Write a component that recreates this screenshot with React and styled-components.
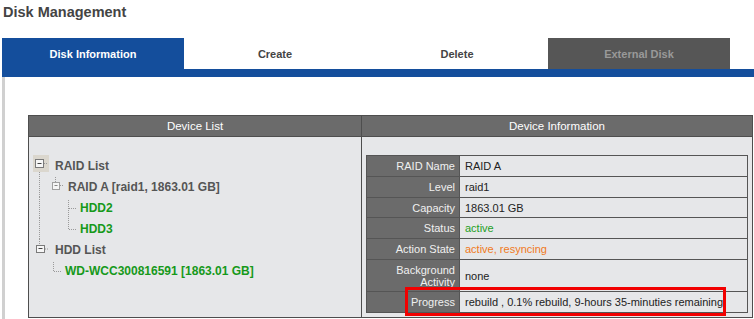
import React from 'react';
import styled, { createGlobalStyle } from 'styled-components';

const GlobalStyle = createGlobalStyle`
    body {
        margin: 0;
        background: #fff;
        font-family: "Liberation Sans", Arial, sans-serif;
    }
`;

const Page = styled.div`
    width: 754px;
    height: 319px;
    overflow: hidden;
`;

const Title = styled.h1`
    margin: 0;
    height: 38px;
    box-sizing: border-box;
    padding: 4px 0 0 3px;
    font-size: 14.5px;
    line-height: 16px;
    font-weight: bold;
    color: #444;
`;

const TabBar = styled.ul`
    list-style: none;
    margin: 0 0 0 2px;
    padding: 0;
    display: flex;
    height: 31px;
    border-bottom: 8px solid #144e9c;
`;

const tabColors = {
    active: { bg: '#144e9c', fg: '#fff' },
    normal: { bg: '#fff', fg: '#444' },
    disabled: { bg: '#565656', fg: '#999' },
};

const Tab = styled.li`
    width: 182px;
    display: flex;
    align-items: center;
    justify-content: center;
    font-size: 11px;
    font-weight: bold;
    background: ${(p) => tabColors[p.$state].bg};
    color: ${(p) => tabColors[p.$state].fg};
`;

const Content = styled.div`
    margin-left: 2px;
    border-left: 3px solid #d0d0d0;
    padding: 38px 1px 0 23px;
    height: 242px;
    box-sizing: border-box;
`;

const DeviceTable = styled.div`
    display: grid;
    grid-template-columns: 332px 1fr;
    border: 1px solid #4e4e4e;
    background: #e6e7e9;
`;

const HeadCell = styled.div`
    height: 20px;
    line-height: 20px;
    background: #6b6b6b;
    color: #fff;
    font-size: 11.5px;
    text-align: center;
    border-bottom: 1px solid #4e4e4e;
    border-left: ${(p) => (p.$divider ? '1px solid #4e4e4e' : 'none')};
`;

const BodyCell = styled.div`
    padding: ${(p) => p.$pad};
    border-left: ${(p) => (p.$divider ? '1px solid #4e4e4e' : 'none')};
`;

/* ---------- tree ---------- */

const TreeRow = styled.div`
    display: flex;
    align-items: center;
    height: 21px;
    font-size: 12px;
    font-weight: bold;
    white-space: nowrap;
    color: ${(p) => (p.$leaf ? '#16991a' : '#555')};
`;

const dot = { stroke: '#9a9a9a', strokeWidth: 1, strokeDasharray: '1 1', fill: 'none' };

const MinusBox = ({ x, y, w, h, light }) => (
    <g>
        <rect x={x} y={y} width={w} height={h} fill="#f6f6f6" stroke={light ? '#a0a0a0' : '#7a7a7a'} />
        <line x1={x + 2} x2={x + w - 2} y1={y + Math.floor(h / 2)} y2={y + Math.floor(h / 2)} stroke={light ? '#888' : '#444'} />
    </g>
);

const guides = {
    root: {
        w: 24,
        draw: (
            <>
                <rect x="2" y="0" width="16" height="17" fill="#dbd7ce" />
                <MinusBox x={4.5} y={4.5} w={8} h={8} />
                <line x1="13" x2="17" y1="8.5" y2="8.5" {...dot} />
                <line x1="8.5" x2="8.5" y1="17" y2="21" {...dot} />
            </>
        ),
    },
    branch: {
        w: 37,
        draw: (
            <>
                <line x1="8.5" x2="8.5" y1="0" y2="21" {...dot} />
                <line x1="24.5" x2="24.5" y1="1" y2="6" {...dot} />
                <MinusBox x={21.5} y={6.5} w={7} h={7} light />
                <line x1="29" x2="33" y1="9.5" y2="9.5" {...dot} />
            </>
        ),
    },
    child: {
        w: 49,
        draw: (
            <>
                <line x1="8.5" x2="8.5" y1="0" y2="21" {...dot} />
                <line x1="37.5" x2="37.5" y1="3" y2="21" {...dot} />
                <line x1="38" x2="45" y1="11.5" y2="11.5" {...dot} />
            </>
        ),
    },
    lastChild: {
        w: 49,
        draw: (
            <>
                <line x1="8.5" x2="8.5" y1="0" y2="21" {...dot} />
                <line x1="37.5" x2="37.5" y1="0" y2="11" {...dot} />
                <line x1="38" x2="45" y1="11.5" y2="11.5" {...dot} />
            </>
        ),
    },
    lastBranch: {
        w: 24,
        draw: (
            <>
                <line x1="8.5" x2="8.5" y1="0" y2="6" {...dot} />
                <MinusBox x={5.5} y={6.5} w={8} h={7} />
                <line x1="14" x2="18" y1="10" y2="10" {...dot} />
            </>
        ),
    },
    lastLeaf: {
        w: 34,
        draw: (
            <>
                <line x1="22.5" x2="22.5" y1="2" y2="11" {...dot} />
                <line x1="23" x2="31" y1="11.5" y2="11.5" {...dot} />
            </>
        ),
    },
};

const Guide = ({ kind }) => {
    const g = guides[kind];
    return (
        <svg width={g.w} height="21" viewBox={`0 0 ${g.w} 21`} style={{ flex: 'none', display: 'block' }}>
            {g.draw}
        </svg>
    );
};

const treeRows = [
    { kind: 'root', label: 'RAID List' },
    { kind: 'branch', label: 'RAID A [raid1, 1863.01 GB]' },
    { kind: 'child', label: 'HDD2', leaf: true },
    { kind: 'lastChild', label: 'HDD3', leaf: true },
    { kind: 'lastBranch', label: 'HDD List' },
    { kind: 'lastLeaf', label: 'WD-WCC300816591 [1863.01 GB]', leaf: true },
];

/* ---------- info table ---------- */

const InfoWrap = styled.div`
    position: relative;
`;

const InfoGrid = styled.div`
    display: grid;
    grid-template-columns: 92px 1fr;
    gap: 1px;
    background: #555;
    border: 1px solid #555;
    font-size: 11px;
`;

const Label = styled.div`
    min-height: ${(p) => p.$h || 20}px;
    background: #6b6b6b;
    color: #f0f0f0;
    text-align: right;
    padding-right: 4px;
    display: flex;
    align-items: center;
    justify-content: flex-end;
    line-height: 12px;
`;

const valueColors = { plain: '#222', ok: '#1fa01f', warn: '#f07a1c' };

const Value = styled.div`
    min-height: ${(p) => p.$h || 20}px;
    background: #e6e7e9;
    padding-left: 5px;
    display: flex;
    align-items: center;
    white-space: nowrap;
    color: ${(p) => valueColors[p.$tone || 'plain']};
`;

const Highlight = styled.div`
    position: absolute;
    left: 39px;
    bottom: -3px;
    width: 321px;
    height: 29px;
    box-sizing: border-box;
    border: 3px solid #f20000;
    pointer-events: none;
`;

const infoRows = [
    { label: 'RAID Name', value: 'RAID A' },
    { label: 'Level', value: 'raid1' },
    { label: 'Capacity', value: '1863.01 GB', h: 19 },
    { label: 'Status', value: 'active', tone: 'ok' },
    { label: 'Action State', value: 'active, resyncing', tone: 'warn' },
    { label: <>Background<br />Activity</>, value: 'none', h: 31 },
    { label: 'Progress', value: 'rebuild , 0.1% rebuild, 9-hours 35-minuties remaining' },
];

export default function App() {
    return (
        <Page>
            <GlobalStyle />
            <Title>Disk Management</Title>
            <TabBar>
                <Tab $state="active">Disk Information</Tab>
                <Tab $state="normal">Create</Tab>
                <Tab $state="normal">Delete</Tab>
                <Tab $state="disabled">External Disk</Tab>
            </TabBar>
            <Content>
                <DeviceTable>
                    <HeadCell>Device List</HeadCell>
                    <HeadCell $divider>Device Information</HeadCell>
                    <BodyCell $pad="18px 0 0 2px">
                        {treeRows.map((r) => (
                            <TreeRow key={r.kind} $leaf={r.leaf}>
                                <Guide kind={r.kind} />
                                {r.label}
                            </TreeRow>
                        ))}
                    </BodyCell>
                    <BodyCell $divider $pad="18px 4px 4px 4px">
                        <InfoWrap>
                            <InfoGrid>
                                {infoRows.map((r, i) => (
                                    <React.Fragment key={i}>
                                        <Label $h={r.h}>{r.label}</Label>
                                        <Value $h={r.h} $tone={r.tone}>{r.value}</Value>
                                    </React.Fragment>
                                ))}
                            </InfoGrid>
                            <Highlight />
                        </InfoWrap>
                    </BodyCell>
                </DeviceTable>
            </Content>
        </Page>
    );
}
